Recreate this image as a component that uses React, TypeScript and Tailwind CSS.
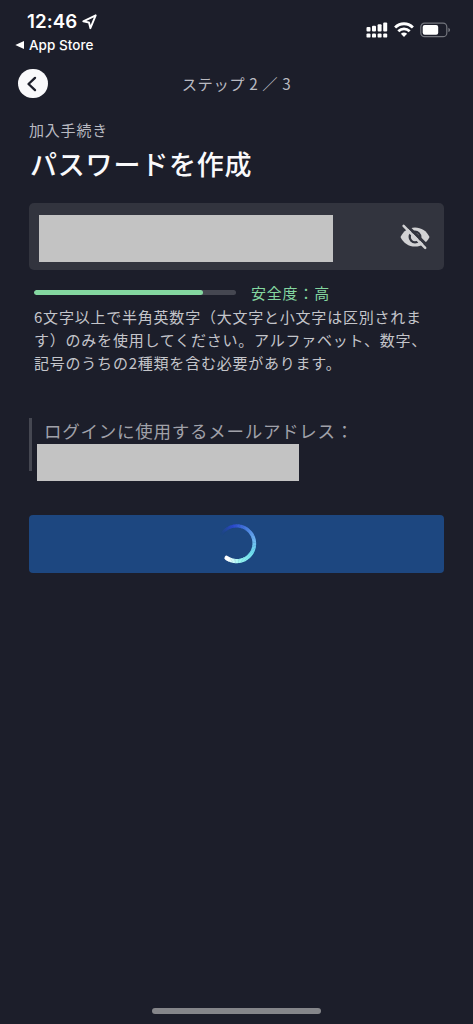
import { useState } from "react";

const STRENGTH = 83.5;

// colours along the spinner arc, tail to head
const ARC = [
  [34, 70, 150],
  [43, 72, 205],
  [72, 124, 222],
  [112, 180, 240],
  [112, 226, 240],
  [150, 245, 240],
  [255, 255, 255],
];

const arcColor = (t: number) => {
  const pos = t * (ARC.length - 1);
  const i = Math.min(Math.floor(pos), ARC.length - 2);
  const c = ARC[i].map((v, k) => Math.round(v + (ARC[i + 1][k] - v) * (pos - i)));
  return `rgb(${c.join(",")})`;
};

const Spinner = () => {
  const count = 60;
  const start = -150;
  const sweep = 275;
  const point = (deg: number) => {
    const a = (deg * Math.PI) / 180;
    return `${19.7 + 17.6 * Math.cos(a)} ${19.5 + 17.6 * Math.sin(a)}`;
  };
  return (
    <svg width="40" height="40" viewBox="0 0 40 40" fill="none">
      {Array.from({ length: count }, (_, i) => {
        const a = start + (sweep * i) / count;
        const b = start + (sweep * (i + 1)) / count + (i < count - 1 ? 1 : 0);
        return (
          <path
            key={i}
            d={`M${point(a)}A17.6 17.6 0 0 1 ${point(b)}`}
            stroke={arcColor(i / (count - 1))}
            strokeWidth={2.8 + (1.6 * i) / count}
            strokeLinecap={i === count - 1 ? "round" : "butt"}
            opacity={Math.min(1, 0.1 + i / 10)}
          />
        );
      })}
    </svg>
  );
};

const StatusBar = () => {
  return (
    <div className="flex h-[60px] justify-between font-['Inter','Liberation_Sans',sans-serif] text-white">
      <div className="pl-[15px] pt-[9px]">
        <div className="flex items-center gap-[5px] pl-[12px]">
          <span className="text-[18.7px] font-semibold leading-[25px] tracking-[0.05px]">12:46</span>
          <svg width="15" height="16" viewBox="0 0 15 16" fill="none">
            <path d="M13.7 1.3L1.3 7.4L7 8.5L8.4 14.2Z" stroke="white" strokeWidth="1.9" strokeLinejoin="round" />
          </svg>
        </div>
        <div className="flex items-center gap-[5px]">
          <svg width="9" height="8" viewBox="0 0 9 8">
            <path d="M0.3 4L9 0V8Z" fill="white" />
          </svg>
          <span className="text-[13.5px] font-medium leading-[22px] tracking-[0.05px]">App Store</span>
        </div>
      </div>
      <div className="flex h-[16px] gap-[6px] pr-[22px] mt-[22px]">
        <svg width="22" height="16" viewBox="0 0 22 16" fill="white">
          <rect x="0.5" y="5" width="4" height="4.5" rx="1" />
          <rect x="6" y="3.7" width="4" height="5.8" rx="1" />
          <rect x="11.6" y="2.2" width="4" height="7.3" rx="1" />
          <rect x="17.2" y="0.5" width="4" height="9" rx="1" />
          <rect x="0.5" y="11.4" width="4" height="4.2" rx="1.2" />
          <rect x="6" y="11.4" width="4" height="4.2" rx="1.2" />
          <rect x="11.6" y="11.4" width="4" height="4.2" rx="1.2" />
          <rect x="17.2" y="11.4" width="4" height="4.2" rx="1.2" />
        </svg>
        <svg width="20" height="16" viewBox="0 0 20 16" fill="none" stroke="white" strokeWidth="2.8">
          <path d="M1.1 5.5C6.2 0.5 13.8 0.5 18.9 5.5" />
          <path d="M4.3 9.2C7.6 6.1 12.4 6.1 15.7 9.2" />
          <path d="M6.9 11.8C8.7 10.2 11.3 10.2 13.1 11.8L10 15Z" fill="white" stroke="none" />
        </svg>
        <svg width="31" height="16" viewBox="0 0 31 16" fill="none">
          <rect x="0.8" y="1.1" width="26" height="13.6" rx="3.8" stroke="#73757d" strokeWidth="1.2" />
          <rect x="2.7" y="3" width="15.5" height="9.8" rx="2" fill="white" />
          <path d="M28.4 5.7C30.6 6.5 30.6 9.3 28.4 10.1Z" fill="#73757d" />
        </svg>
      </div>
    </div>
  );
};

const App = () => {
  const [visible, setVisible] = useState(false);

  return (
    <div className="flex h-[1024px] w-full flex-col bg-[#1c1e2a] font-['Noto_Sans_CJK_JP',sans-serif]">
      <StatusBar />

      <header className="grid h-[47px] grid-cols-[65px_1fr_65px] items-center">
        <button className="ml-[18px] flex size-[29.5px] items-center justify-center rounded-full bg-[#f9f9fb]">
          <svg width="30" height="30" viewBox="0 0 30 30" fill="none">
            <path d="M17.3 8.8L10.7 15L17.3 21.2" stroke="#1c1e2a" strokeWidth="2.4" strokeLinecap="round" strokeLinejoin="round" />
          </svg>
        </button>
        <p className="mb-[2px] whitespace-pre text-center text-[15.3px] leading-[24px] tracking-[0.6px] text-[#b9bac1]">ステップ 2 ／ 3</p>
      </header>

      <main className="flex flex-col px-[29px]">
        <p className="mt-[11px] text-[15px] leading-[24px] tracking-[0.8px] text-[#b9bac1]">加入手続き</p>
        <h1 className="mt-[2px] pl-[1px] text-[27px] font-medium leading-[40px] tracking-[0.8px] text-[#f9f9fb]">パスワードを作成</h1>

        <div className="mt-[19px] flex h-[67px] items-center justify-between rounded-[5px] bg-[#32343e] pl-[10px] pr-[14px]">
          <div className="mt-[4px] h-[47px] w-[294px] bg-[#c3c3c3]" />
          <button onClick={() => setVisible(!visible)}>
            <svg width="30" height="26" viewBox="0 0 30 26" fill="none">
              <path d="M0.5 13C3.3 6.8 8.7 3.4 15 3.4S26.7 6.8 29.5 13C26.7 19.2 21.3 22.6 15 22.6S3.3 19.2 0.5 13Z" fill="#d2d2d4" />
              <circle cx="15" cy="13" r="5.3" fill="#d2d2d4" stroke="#32343e" strokeWidth="2.3" />
              {!visible && (
                <>
                  <path d="M5.5 0.2L28 22.4" stroke="#32343e" strokeWidth="3" />
                  <path d="M3.6 1.9L25.2 23.8" stroke="#d2d2d4" strokeWidth="2.5" strokeLinecap="round" />
                </>
              )}
            </svg>
          </button>
        </div>

        <div className="mt-[10px] flex h-[24px] pl-[5px]">
          <div className="mt-[10px] h-[5px] w-[202px] overflow-hidden rounded-full bg-[#454751]">
            <div className="h-full rounded-full bg-[#84d7a0]" style={{ width: `${STRENGTH}%` }} />
          </div>
          <span className="ml-[15px] mt-px text-[15px] leading-[24px] tracking-[0.8px] text-[#84d7a0]">安全度：高</span>
        </div>

        <p className="mt-px whitespace-nowrap pl-[5px] text-[15px] leading-[23px] tracking-[0.78px] text-[#c4c5ca]">
          6文字以上で半角英数字（大文字と小文字は区別されま
          <br />
          す）のみを使用してください。アルファベット、数字、
          <br />
          記号のうちの2種類を含む必要があります。
        </p>

        <div className="mt-[44px] flex h-[64px]">
          <div className="h-[53px] w-[3px] bg-[#454751]" />
          <div className="pl-[5px]">
            <p className="pl-[7px] text-[17.5px] leading-[26px] tracking-[0.74px] text-[#a0a1a9]">ログインに使用するメールアドレス：</p>
            <div className="h-[37px] w-[262px] bg-[#c3c3c3]" />
          </div>
        </div>

        <button className="mt-[33px] flex h-[58px] items-center justify-center rounded-[4px] bg-[#1d4780]">
          <Spinner />
        </button>
      </main>

      <div className="mx-auto mb-[10px] mt-auto h-[6px] w-[169px] rounded-full bg-[#85868a]" />
    </div>
  );
};

export default App;
